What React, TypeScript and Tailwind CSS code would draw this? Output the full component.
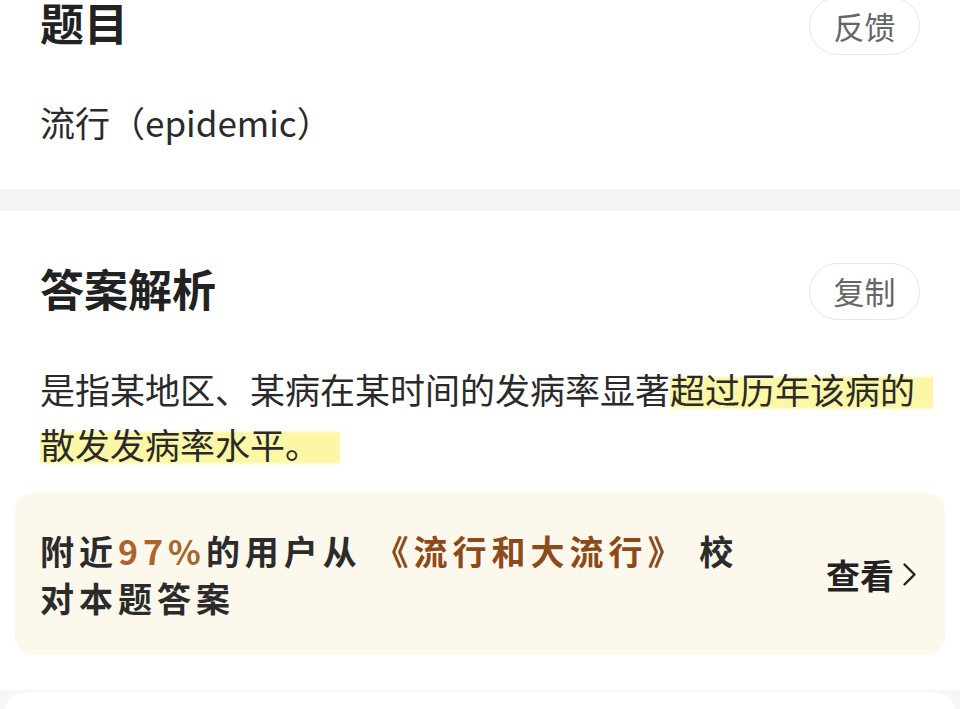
export default function App() {
  return (
    <div className="min-h-[709px] bg-white font-['Noto_Sans_CJK_SC','Noto_Sans',sans-serif] text-[#222] overflow-hidden">
      {/* 题目 */}
      <section className="px-[40px] pb-[40px]">
        <div className="-mt-[3px] flex h-[58px] items-center justify-between">
          <h1 className="pb-[8px] text-[44px] font-bold leading-none text-[#222]">题目</h1>
          <button className="flex h-[58px] w-[111px] items-center justify-center rounded-full border-[1.5px] border-[#e6e6e6] text-[31px] text-[#666]">
            反馈
          </button>
        </div>
        <p className="mt-[39px] text-[35px] leading-[55px] text-[#2a2a2a]">流行（epidemic）</p>
      </section>

      <div className="h-[22px] bg-[#f4f4f4]" />

      {/* 答案解析 */}
      <section className="pb-[35px]">
        <div className="mt-[52px] flex h-[57px] items-center justify-between px-[40px]">
          <h2 className="pb-[8px] text-[44px] font-bold leading-none text-[#222]">答案解析</h2>
          <button className="flex h-[57px] w-[111px] items-center justify-center rounded-full border-[1.5px] border-[#e6e6e6] text-[31px] text-[#666]">
            复制
          </button>
        </div>
        <p className="mt-[41px] whitespace-nowrap pl-[40px] text-[35px] leading-[55px] text-[#2a2a2a]">
          是指某地区、某病在某时间的发病率显著
          <span className="bg-[linear-gradient(to_bottom,transparent_24%,#fcf7a6_30%,#fcf7a6_86%,transparent_93%)] pr-[18px]">
            超过历年该病的
          </span>
          <br />
          <span className="bg-[linear-gradient(to_bottom,transparent_24%,#fcf7a6_30%,#fcf7a6_86%,transparent_93%)] pr-[20px]">
            散发发病率水平。
          </span>
        </p>

        <div className="mx-[15px] mt-[22px] flex h-[162px] items-center justify-between rounded-[18px] bg-[#fdf8ec] pl-[25px] pr-[28px]">
          <div className="text-[34px] font-bold leading-[47px] tracking-[5px] text-[#2b2b2b]">
            <div>
              附近<span className="text-[#a9652c]">97%</span>的用户从 <span className="text-[#8c4a1b]">《流行和大流行》</span> 校
            </div>
            <div>对本题答案</div>
          </div>
          <div className="flex items-center gap-[8px] text-[34px] font-bold text-[#222]">
            <span>查看</span>
            <svg width="15" height="25" viewBox="0 0 15 25" fill="none">
              <path d="M2.5 2.5l10 10L2.5 22.5" stroke="#222" strokeWidth="2.4" strokeLinecap="round" strokeLinejoin="round" />
            </svg>
          </div>
        </div>
      </section>

      <div className="bg-[#f6f6f6] px-[3px] pt-[2px]">
        <div className="h-[40px] rounded-t-[24px] bg-white" />
      </div>
    </div>
  );
}
